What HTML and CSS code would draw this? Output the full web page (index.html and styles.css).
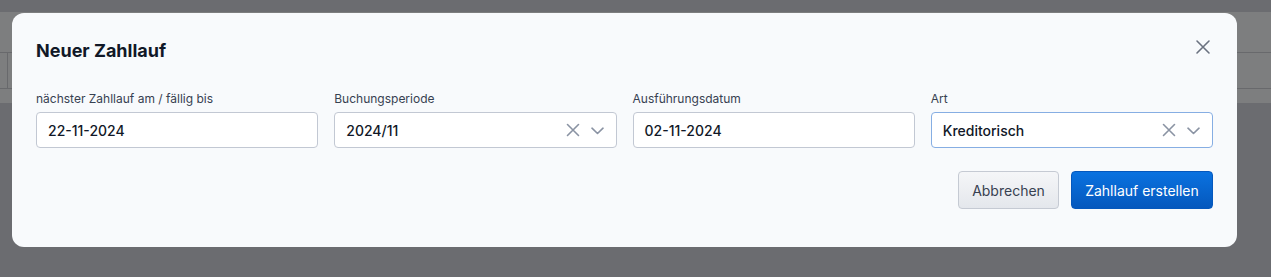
FILE: index.html
```html
<!DOCTYPE html>
<html lang="de">
<head>
<meta charset="utf-8">
<title>Neuer Zahllauf</title>
<link rel="stylesheet" href="styles.css">
</head>
<body>
<div class="page">
  <div class="band">
    <div class="toolbar"><div class="tool-cell"></div></div>
  </div>
</div>
<div class="overlay">
  <div class="modal">
    <div class="modal-head">
      <h2 class="modal-title">Neuer Zahllauf</h2>
      <button class="close-btn" aria-label="Schließen">
        <svg width="16" height="16" viewBox="0 0 16 16"><path d="M2 2 L14 14 M14 2 L2 14" stroke="#6b7280" stroke-width="1.6" stroke-linecap="round" fill="none"/></svg>
      </button>
    </div>
    <div class="fields">
      <div class="field">
        <label class="label">nächster Zahllauf am / fällig bis</label>
        <div class="input"><span class="value">22-11-2024</span></div>
      </div>
      <div class="field">
        <label class="label">Buchungsperiode</label>
        <div class="input"><span class="value">2024/11</span>
          <span class="icons">
            <svg class="clear" width="14" height="14" viewBox="0 0 14 14"><path d="M1.5 1.5 L12.5 12.5 M12.5 1.5 L1.5 12.5" stroke="#8a93a3" stroke-width="1.6" stroke-linecap="round" fill="none"/></svg>
            <svg class="chev" width="13" height="8" viewBox="0 0 13 8"><path d="M1 1.2 L6.5 6.5 L12 1.2" stroke="#8a93a3" stroke-width="1.6" stroke-linecap="round" stroke-linejoin="round" fill="none"/></svg>
          </span>
        </div>
      </div>
      <div class="field">
        <label class="label">Ausführungsdatum</label>
        <div class="input"><span class="value">02-11-2024</span></div>
      </div>
      <div class="field">
        <label class="label">Art</label>
        <div class="input focus"><span class="value">Kreditorisch</span>
          <span class="icons">
            <svg class="clear" width="14" height="14" viewBox="0 0 14 14"><path d="M1.5 1.5 L12.5 12.5 M12.5 1.5 L1.5 12.5" stroke="#8a93a3" stroke-width="1.6" stroke-linecap="round" fill="none"/></svg>
            <svg class="chev" width="13" height="8" viewBox="0 0 13 8"><path d="M1 1.2 L6.5 6.5 L12 1.2" stroke="#8a93a3" stroke-width="1.6" stroke-linecap="round" stroke-linejoin="round" fill="none"/></svg>
          </span>
        </div>
      </div>
    </div>
    <div class="modal-foot">
      <button class="btn btn-secondary">Abbrechen</button>
      <button class="btn btn-primary">Zahllauf erstellen</button>
    </div>
  </div>
</div>
</body>
</html>
```
FILE: styles.css
```css
* { box-sizing: border-box; }
html, body { margin: 0; padding: 0; }
body {
  background: #6b6c70;
  font-family: Inter, "Noto Sans", sans-serif;
  width: 1271px;
  height: 277px;
  overflow: hidden;
}
.page { padding-top: 12px; }
.band {
  height: 91px;
  background: #7d7e7f;
  padding-top: 40px;
}
.toolbar {
  height: 37px;
  border-top: 1px solid #68696c;
  border-bottom: 1px solid #68696c;
}
.tool-cell {
  width: 8px;
  height: 100%;
  border-right: 1px solid #68696c;
}
.overlay {
  position: fixed;
  inset: 0;
  padding: 13px 34px 0 12px;
}
.modal {
  width: 1225px;
  height: 234px;
  background: #f8fafc;
  border-radius: 12px;
  padding: 24px 24px 0 24px;
}
.modal-head {
  display: flex;
  justify-content: space-between;
  align-items: flex-start;
  height: 28px;
}
.modal-title {
  margin: 0;
  font-size: 18px;
  font-weight: 700;
  color: #111827;
  line-height: 28px;
}
.close-btn {
  background: none;
  border: 0;
  padding: 0;
  margin-right: 2px;
  margin-top: 2px;
  width: 16px;
  height: 16px;
  display: flex;
}
.fields {
  display: grid;
  grid-template-columns: repeat(4, 1fr);
  gap: 16px;
  margin-top: 26px;
}
.field { display: flex; flex-direction: column; }
.label {
  font-size: 12px;
  line-height: 16px;
  color: #374151;
  margin-bottom: 5px;
}
.input {
  height: 36px;
  background: #fff;
  border: 1px solid #c2c8d3;
  border-radius: 4px;
  display: flex;
  align-items: center;
  padding: 0 12px 0 11px;
}
.input.focus { border-color: #86aee3; }
.value {
  font-size: 14px;
  font-weight: 500;
  color: #111827;
  flex: 1;
}
.icons {
  display: flex;
  align-items: center;
  gap: 11px;
}
.chev { margin-top: 1px; }
.modal-foot {
  display: flex;
  justify-content: flex-end;
  gap: 12px;
  margin-top: 23px;
}
.btn {
  height: 38px;
  border-radius: 4px;
  font-family: Inter, "Noto Sans", sans-serif;
  font-size: 14px;
  padding: 0;
  white-space: nowrap;
}
.btn-secondary {
  width: 101px;
  background: linear-gradient(#f5f6f8, #e4e7ec);
  border: 1px solid #c5cad3;
  color: #374151;
}
.btn-primary {
  width: 142px;
  background: linear-gradient(#0a72e0, #0558bd);
  border: 1px solid #0558bd;
  color: #fff;
}
```
